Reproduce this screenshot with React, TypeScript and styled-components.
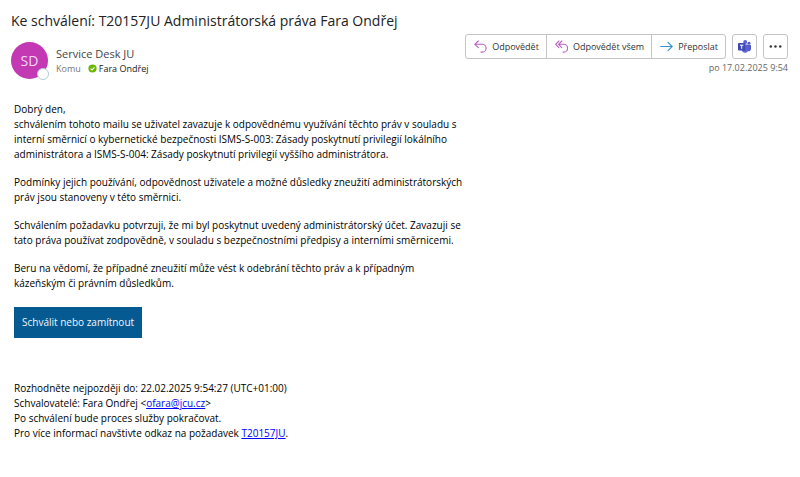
import React from "react";
import styled, { createGlobalStyle } from "styled-components";

const GlobalStyle = createGlobalStyle`
  * { box-sizing: border-box; }
  body {
    margin: 0;
    background: #fff;
    color: #000;
    font-family: "Open Sans", "Noto Sans", sans-serif;
  }
  button { font: inherit; color: inherit; cursor: pointer; }
  svg { display: block; flex: none; }
`;

const Page = styled.main`
  padding: 11px 12px 24px 11px;
`;

const Subject = styled.h1`
  margin: 0;
  font-size: 14px;
  line-height: 20px;
  font-weight: 400;
  color: #222;
`;

const Header = styled.header`
  display: flex;
  justify-content: space-between;
  align-items: flex-start;
  gap: 16px;
  padding-top: 3px;
`;

const Sender = styled.div`
  display: flex;
  align-items: center;
  gap: 8px;
  padding-top: 8px;
`;

const Avatar = styled.div`
  position: relative;
  display: grid;
  place-items: center;
  width: 37px;
  height: 37px;
  border-radius: 50%;
  background: #c239b3;
  color: #f3d6f0;
  font-size: 14px;
`;

const Presence = styled.span`
  position: absolute;
  right: -1px;
  bottom: -1px;
  width: 12px;
  height: 12px;
  border: 1px solid #b5cbd6;
  border-radius: 50%;
  background: #fff;
`;

const SenderName = styled.div`
  font-size: 11px;
  line-height: 16px;
  color: #444;
`;

const Recipient = styled.div`
  display: flex;
  align-items: center;
  gap: 2px;
  font-size: 9px;
  line-height: 14px;
  color: #222;
`;

const RecipientLabel = styled.span`
  margin-right: 5px;
  color: #777;
`;

const Side = styled.div`
  display: flex;
  flex-direction: column;
  align-items: flex-end;
  gap: 2px;
`;

const Toolbar = styled.div`
  display: flex;
  gap: 6px;
`;

const ButtonGroup = styled.div`
  display: flex;
  border: 1px solid #c4c4c4;
  border-radius: 3px;
`;

const ReplyButton = styled.button`
  display: flex;
  align-items: center;
  gap: 5px;
  height: 23px;
  padding: 0 7px 0 8px;
  border: 0;
  background: none;
  color: #333;
  font-size: 9px;
  white-space: nowrap;

  & + & {
    border-left: 1px solid #c4c4c4;
  }
`;

const IconButton = styled.button`
  display: grid;
  place-items: center;
  width: 25px;
  height: 25px;
  padding: 0;
  border: 1px solid #c4c4c4;
  border-radius: 3px;
  background: none;
`;

const Sent = styled.time`
  font-size: 9px;
  line-height: 14px;
  color: #666;
`;

const Body = styled.article`
  padding: 23px 3px 0;
  font-size: 10px;
  line-height: 15px;
`;

const Paragraph = styled.p`
  margin: 0 0 13px;
`;

const Approve = styled.button`
  display: block;
  height: 31px;
  margin: 16px 0 43px;
  padding: 0 8px;
  border: 0;
  background: #055a92;
  color: #f2f7fb;
`;

const Link = styled.a`
  color: #00f;
  text-decoration: underline;
`;

const ReplyIcon = () => (
  <svg width="13" height="13" viewBox="0 0 13 13" fill="none" stroke="#b95fc4" strokeWidth="1.1" strokeLinecap="round" strokeLinejoin="round">
    <path d="M4.3 1 .8 4.3l3.5 3.3M.9 4.3h7.3a3.8 3.8 0 0 1 0 7.8H6.9" />
  </svg>
);

const ReplyAllIcon = () => (
  <svg width="13" height="13" viewBox="0 0 13 13" fill="none" stroke="#b95fc4" strokeWidth="1.1" strokeLinecap="round" strokeLinejoin="round">
    <path d="M3.9 1 .7 4.3l3.2 3.3M6.8 1 3.6 4.3l3.2 3.3M3.7 4.3h5a3.8 3.8 0 0 1 0 7.8H8" />
  </svg>
);

const ForwardIcon = () => (
  <svg width="13" height="13" viewBox="0 0 13 13" fill="none" stroke="#3596d3" strokeWidth="1.1" strokeLinecap="round" strokeLinejoin="round">
    <path d="M.7 6.5h11.4M8 2.3l4.2 4.2L8 10.7" />
  </svg>
);

const TeamsIcon = () => (
  <svg width="13" height="13" viewBox="0 0 13 13">
    <circle cx="11" cy="3.2" r="1.5" fill="#5059c9" />
    <path d="M9 5h3.3c.4 0 .7.3.7.7v3.4a2.1 2.1 0 0 1-4 .9z" fill="#5059c9" />
    <circle cx="7.2" cy="2.1" r="2" fill="#5b63d3" />
    <path d="M4 4.5h5.6c.4 0 .7.3.7.7v4.2a3.4 3.4 0 0 1-6.7.7z" fill="#5b63d3" />
    <rect y="3" width="7.4" height="7.4" rx=".7" fill="#4049b5" />
    <path d="M2 5.2h3.4M3.7 5.2v3.6" stroke="#fff" strokeWidth="1" />
  </svg>
);

const MoreIcon = () => (
  <svg width="13" height="13" viewBox="0 0 13 13" fill="#333">
    <circle cx="1.8" cy="6.5" r="1.2" />
    <circle cx="6.5" cy="6.5" r="1.2" />
    <circle cx="11.2" cy="6.5" r="1.2" />
  </svg>
);

const CheckIcon = () => (
  <svg width="9" height="9" viewBox="0 0 9 9">
    <circle cx="4.5" cy="4.5" r="4.1" fill="#6bb700" />
    <path d="m2.6 4.6 1.4 1.3 2.5-2.5" fill="none" stroke="#fff" strokeWidth="1.1" />
  </svg>
);

export default function App() {
  return (
    <>
      <GlobalStyle />
      <Page>
        <Subject>Ke schválení: T20157JU Administrátorská práva Fara Ondřej</Subject>
        <Header>
          <Sender>
            <Avatar>SD<Presence /></Avatar>
            <div>
              <SenderName>Service Desk JU</SenderName>
              <Recipient>
                <RecipientLabel>Komu</RecipientLabel>
                <CheckIcon />
                <span>Fara Ondřej</span>
              </Recipient>
            </div>
          </Sender>
          <Side>
            <Toolbar>
              <ButtonGroup>
                <ReplyButton><ReplyIcon />Odpovědět</ReplyButton>
                <ReplyButton><ReplyAllIcon />Odpovědět všem</ReplyButton>
                <ReplyButton><ForwardIcon />Přeposlat</ReplyButton>
              </ButtonGroup>
              <IconButton aria-label="Teams"><TeamsIcon /></IconButton>
              <IconButton aria-label="Další akce"><MoreIcon /></IconButton>
            </Toolbar>
            <Sent dateTime="2025-02-17T09:54">po 17.02.2025 9:54</Sent>
          </Side>
        </Header>
        <Body>
          <Paragraph>
            Dobrý den,<br />
            schválením tohoto mailu se uživatel zavazuje k odpovědnému využívání těchto práv v souladu s<br />
            interní směrnicí o kybernetické bezpečnosti ISMS-S-003: Zásady poskytnutí privilegií lokálního<br />
            administrátora a ISMS-S-004: Zásady poskytnutí privilegií vyššího administrátora.
          </Paragraph>
          <Paragraph>
            Podmínky jejich používání, odpovědnost uživatele a možné důsledky zneužití administrátorských<br />
            práv jsou stanoveny v této směrnici.
          </Paragraph>
          <Paragraph>
            Schválením požadavku potvrzuji, že mi byl poskytnut uvedený administrátorský účet. Zavazuji se<br />
            tato práva používat zodpovědně, v souladu s bezpečnostními předpisy a interními směrnicemi.
          </Paragraph>
          <Paragraph>
            Beru na vědomí, že případné zneužití může vést k odebrání těchto práv a k případným<br />
            kázeňským či právním důsledkům.
          </Paragraph>
          <Approve>Schválit nebo zamítnout</Approve>
          <Paragraph>
            Rozhodněte nejpozději do: 22.02.2025 9:54:27 (UTC+01:00)<br />
            Schvalovatelé: Fara Ondřej &lt;<Link href="mailto:ofara@jcu.cz">ofara@jcu.cz</Link>&gt;<br />
            Po schválení bude proces služby pokračovat.<br />
            Pro více informací navštivte odkaz na požadavek <Link href="#T20157JU">T20157JU</Link>.
          </Paragraph>
        </Body>
      </Page>
    </>
  );
}
